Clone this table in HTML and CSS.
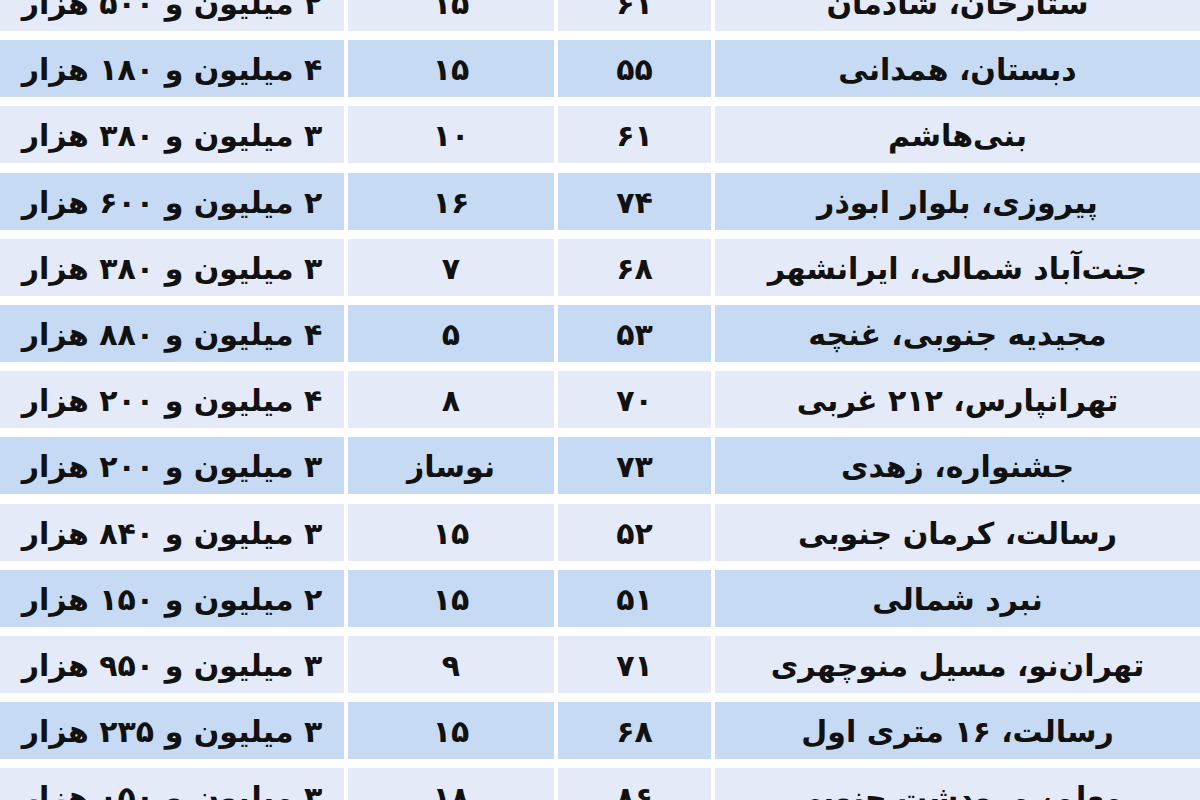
FILE: index.html
```html
<!DOCTYPE html>
<html lang="fa" dir="rtl">
<head>
<meta charset="utf-8">
<link rel="stylesheet" href="styles.css">
</head>
<body>
<div class="table">
  <div class="row light"><div class="cell">ستارخان، شادمان</div><div class="cell">۶۱</div><div class="cell">۱۵</div><div class="cell">۲ میلیون و ۵۰۰ هزار</div></div>
  <div class="row blue"><div class="cell">دبستان، همدانی</div><div class="cell">۵۵</div><div class="cell">۱۵</div><div class="cell">۴ میلیون و ۱۸۰ هزار</div></div>
  <div class="row light"><div class="cell">بنی‌هاشم</div><div class="cell">۶۱</div><div class="cell">۱۰</div><div class="cell">۳ میلیون و ۳۸۰ هزار</div></div>
  <div class="row blue"><div class="cell">پیروزی، بلوار ابوذر</div><div class="cell">۷۴</div><div class="cell">۱۶</div><div class="cell">۲ میلیون و ۶۰۰ هزار</div></div>
  <div class="row light"><div class="cell">جنت‌آباد شمالی، ایرانشهر</div><div class="cell">۶۸</div><div class="cell">۷</div><div class="cell">۳ میلیون و ۳۸۰ هزار</div></div>
  <div class="row blue"><div class="cell">مجیدیه جنوبی، غنچه</div><div class="cell">۵۳</div><div class="cell">۵</div><div class="cell">۴ میلیون و ۸۸۰ هزار</div></div>
  <div class="row light"><div class="cell">تهرانپارس، ۲۱۲ غربی</div><div class="cell">۷۰</div><div class="cell">۸</div><div class="cell">۴ میلیون و ۲۰۰ هزار</div></div>
  <div class="row blue"><div class="cell">جشنواره، زهدی</div><div class="cell">۷۳</div><div class="cell">نوساز</div><div class="cell">۳ میلیون و ۲۰۰ هزار</div></div>
  <div class="row light"><div class="cell">رسالت، کرمان جنوبی</div><div class="cell">۵۲</div><div class="cell">۱۵</div><div class="cell">۳ میلیون و ۸۴۰ هزار</div></div>
  <div class="row blue"><div class="cell">نبرد شمالی</div><div class="cell">۵۱</div><div class="cell">۱۵</div><div class="cell">۲ میلیون و ۱۵۰ هزار</div></div>
  <div class="row light"><div class="cell">تهران‌نو، مسیل منوچهری</div><div class="cell">۷۱</div><div class="cell">۹</div><div class="cell">۳ میلیون و ۹۵۰ هزار</div></div>
  <div class="row blue"><div class="cell">رسالت، ۱۶ متری اول</div><div class="cell">۶۸</div><div class="cell">۱۵</div><div class="cell">۳ میلیون و ۲۳۵ هزار</div></div>
  <div class="row light"><div class="cell">معلم، مرودشت جنوبی</div><div class="cell">۸۶</div><div class="cell">۱۸</div><div class="cell">۳ میلیون و ۰۵۰ هزار</div></div>
</div>
</body>
</html>
```

FILE: styles.css
```css
html, body {
  margin: 0;
  padding: 0;
  background: #ffffff;
  overflow: hidden;
}

body {
  width: 1200px;
  height: 800px;
  font-family: "DejaVu Sans", sans-serif;
  font-weight: bold;
  color: #111111;
}

.table {
  display: flex;
  flex-direction: column;
  gap: 9.2px;
  margin-top: -26px;
}

.row {
  display: grid;
  grid-template-columns: 1fr 153px 206px 344px;
  column-gap: 4px;
  height: 57px;
}

.cell {
  display: flex;
  align-items: center;
  justify-content: center;
  padding-top: 3px;
  font-size: 30px;
  line-height: 1;
  white-space: nowrap;
}

.row.blue .cell {
  background: #c6dbf3;
}

.row.light .cell {
  background: #e4eaf7;
}
```
